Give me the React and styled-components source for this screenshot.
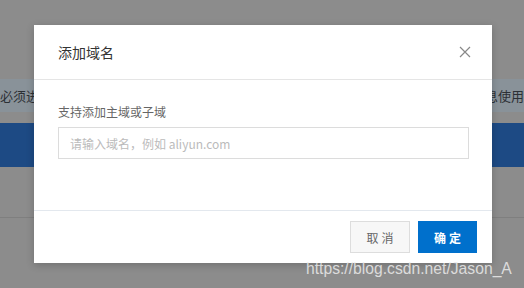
import React from "react";
import styled, { createGlobalStyle } from "styled-components";

const Global = createGlobalStyle`
  html, body { margin: 0; padding: 0; }
  body {
    width: 524px; height: 288px; overflow: hidden;
    background: #8c8c8c;
    font-family: "Microsoft YaHei", "Noto Sans CJK SC", "Liberation Sans", sans-serif;
  }
`;

const Page = styled.div`
  position: relative;
  width: 524px;
  height: 288px;
  overflow: hidden;
  display: flex;
  flex-direction: column;
  padding-top: 79px;
  box-sizing: border-box;
`;

const Notice = styled.div`
  height: 33px;
  background: #899299;
  display: flex;
  align-items: center;
  justify-content: space-between;
  font-size: 13px;
  color: #2c3035;
  white-space: nowrap;
  overflow: hidden;
`;

const NoticeText = styled.span``;

const BlueBand = styled.div`
  margin-top: 11px;
  height: 44px;
  background: #1d4a84;
`;

const Rule = styled.div`
  margin-top: 50px;
  height: 1px;
  background: #7f7f7f;
`;

const Modal = styled.div`
  position: absolute;
  left: 34px;
  top: 25px;
  width: 458px;
  height: 238px;
  background: #fff;
  box-shadow: 0 2px 8px rgba(0, 0, 0, 0.2);
  display: flex;
  flex-direction: column;
`;

const Header = styled.div`
  height: 54px;
  border-bottom: 1px solid #e5e5e5;
  display: flex;
  align-items: center;
  justify-content: space-between;
  padding: 0 21px 0 24px;
`;

const Title = styled.div`
  font-size: 14px;
  color: #333;
`;

const Close = styled.button`
  border: 0;
  background: none;
  padding: 0;
  width: 12px;
  height: 12px;
  display: flex;
  cursor: pointer;
`;

const Body = styled.div`
  flex: 1;
  padding: 24px 23px 0 24px;
  display: flex;
  flex-direction: column;
  border-bottom: 1px solid #e3e8ee;
`;

const Label = styled.label`
  font-size: 12px;
  color: #666;
  line-height: 16px;
  margin-bottom: 7px;
`;

const Input = styled.input`
  height: 32px;
  box-sizing: border-box;
  border: 1px solid #dcdcdc;
  padding: 0 11px;
  font-size: 12px;
  font-family: inherit;
  color: #333;
  outline: none;
  &::placeholder { color: #bbb; }
`;

const Footer = styled.div`
  height: 52px;
  display: flex;
  justify-content: flex-end;
  align-items: flex-start;
  gap: 8px;
  padding: 10px 15px 0 0;
  box-sizing: border-box;
`;

const Button = styled.button`
  width: ${p => (p.$primary ? "59px" : "60px")};
  height: 32px;
  box-sizing: border-box;
  font-size: 12px;
  font-family: inherit;
  letter-spacing: 3px;
  padding: 0 0 0 3px;
  border: 1px solid ${p => (p.$primary ? "#0070cc" : "#dddddd")};
  background: ${p => (p.$primary ? "#0070cc" : "#f7f7f7")};
  color: ${p => (p.$primary ? "#fff" : "#666")};
  font-weight: ${p => (p.$primary ? 700 : 400)};
  cursor: pointer;
`;

const Watermark = styled.div`
  position: absolute;
  left: 306px;
  top: 260px;
  font-family: "Liberation Sans", Arial, sans-serif;
  font-size: 15.7px;
  color: rgba(235, 235, 235, 0.85);
  white-space: nowrap;
`;

export default function App() {
  return (
    <>
      <Global />
      <Page>
        <Notice>
          <NoticeText>必须进行</NoticeText>
          <NoticeText>息使用</NoticeText>
        </Notice>
        <BlueBand />
        <Rule />
        <Modal>
          <Header>
            <Title>添加域名</Title>
            <Close aria-label="关闭">
              <svg width="12" height="12" viewBox="0 0 12 12">
                <path d="M1 1L11 11M11 1L1 11" stroke="#888" strokeWidth="1.2" fill="none" />
              </svg>
            </Close>
          </Header>
          <Body>
            <Label>支持添加主域或子域</Label>
            <Input placeholder="请输入域名，例如 aliyun.com" />
          </Body>
          <Footer>
            <Button>取消</Button>
            <Button $primary>确定</Button>
          </Footer>
        </Modal>
        <Watermark>https://blog.csdn.net/Jason_A</Watermark>
      </Page>
    </>
  );
}
